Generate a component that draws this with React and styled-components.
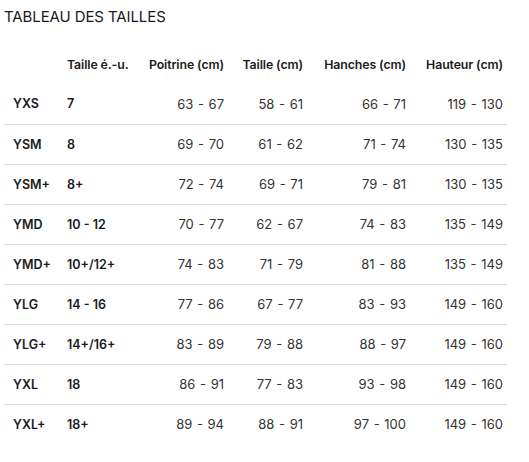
import React from "react";
import styled, { createGlobalStyle } from "styled-components";

const GlobalStyle = createGlobalStyle`
  body {
    margin: 0;
    background: #fff;
    font-family: Inter, "Noto Sans", Arial, sans-serif;
    color: #1f1f1f;
  }
`;

const rows = [
  ["YXS", "7", "63 - 67", "58 - 61", "66 - 71", "119 - 130"],
  ["YSM", "8", "69 - 70", "61 - 62", "71 - 74", "130 - 135"],
  ["YSM+", "8+", "72 - 74", "69 - 71", "79 - 81", "130 - 135"],
  ["YMD", "10 - 12", "70 - 77", "62 - 67", "74 - 83", "135 - 149"],
  ["YMD+", "10+/12+", "74 - 83", "71 - 79", "81 - 88", "135 - 149"],
  ["YLG", "14 - 16", "77 - 86", "67 - 77", "83 - 93", "149 - 160"],
  ["YLG+", "14+/16+", "83 - 89", "79 - 88", "88 - 97", "149 - 160"],
  ["YXL", "18", "86 - 91", "77 - 83", "93 - 98", "149 - 160"],
  ["YXL+", "18+", "89 - 94", "88 - 91", "97 - 100", "149 - 160"],
];

const headers = ["", "Taille é.-u.", "Poitrine (cm)", "Taille (cm)", "Hanches (cm)", "Hauteur (cm)"];
const widths = [54, 78, 92, 79, 103, 97];

const Wrap = styled.div`
  padding: 7px 22px 18px 4px;
`;

const Title = styled.h2`
  margin: 0 0 17px;
  font-size: 15px;
  line-height: 20px;
  font-weight: 400;
  letter-spacing: -0.1px;
  color: #1a1a1a;
`;

const Table = styled.table`
  border-collapse: collapse;
  table-layout: fixed;
  width: 503px;
  font-size: 13px;
`;

const Th = styled.th`
  height: 40px;
  padding: 0 4px 0 9px;
  font-weight: 600;
  font-size: 12.3px;
  letter-spacing: -0.1px;
  text-align: ${(p) => (p.$left ? "left" : "right")};
  white-space: nowrap;
  color: #1a1a1a;
`;

const Tr = styled.tr`
  height: 40px;
  border-bottom: 1px solid #dcdcdc;
  &:last-child {
    border-bottom: none;
  }
`;

const Td = styled.td`
  padding: 0 4px 0 9px;
  white-space: nowrap;
  text-align: ${(p) => (p.$left ? "left" : "right")};
  font-weight: ${(p) => (p.$bold ? 600 : 400)};
  font-size: ${(p) => (p.$bold ? "12.5px" : "13px")};
  word-spacing: ${(p) => (p.$bold ? "0" : "1px")};
  color: ${(p) => (p.$bold ? "#1a1a1a" : "#333")};
`;

export default function App() {
  return (
    <Wrap>
      <GlobalStyle />
      <Title>TABLEAU DES TAILLES</Title>
      <Table>
        <colgroup>
          {widths.map((w, i) => (
            <col key={i} style={{ width: w }} />
          ))}
        </colgroup>
        <thead>
          <tr>
            {headers.map((h, i) => (
              <Th key={i} $left={i < 2}>
                {h}
              </Th>
            ))}
          </tr>
        </thead>
        <tbody>
          {rows.map((r) => (
            <Tr key={r[0]}>
              {r.map((c, i) => (
                <Td key={i} $left={i < 2} $bold={i < 2}>
                  {c}
                </Td>
              ))}
            </Tr>
          ))}
        </tbody>
      </Table>
    </Wrap>
  );
}
